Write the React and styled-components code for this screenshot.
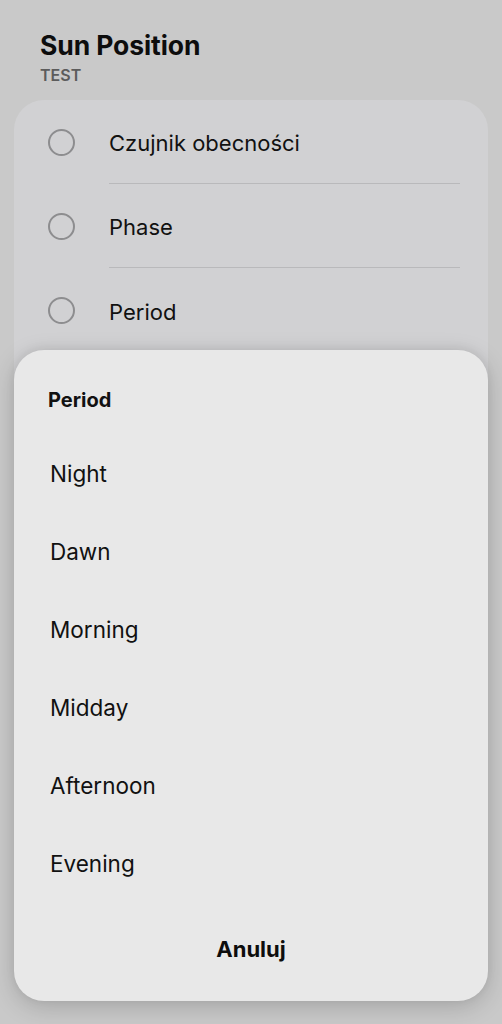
import React from "react";
import styled, { createGlobalStyle } from "styled-components";

const Global = createGlobalStyle`
  html, body { margin: 0; padding: 0; background: #c9c9c9; }
  body { font-family: Inter, "Noto Sans", Roboto, sans-serif; color: #111; -webkit-font-smoothing: antialiased; }
  * { box-sizing: border-box; }
`;

const Page = styled.div`
  width: 502px;
  height: 1024px;
  overflow: hidden;
  background: #c9c9c9;
  position: relative;
`;

const Header = styled.header`
  padding: 29px 40px 0 40px;
  display: flex;
  flex-direction: column;
`;

const Title = styled.h1`
  margin: 0;
  font-size: 26.5px;
  line-height: 32px;
  font-weight: 700;
  color: #0d0d0d;
  letter-spacing: -0.1px;
`;

const Subtitle = styled.div`
  margin-top: 4px;
  font-size: 16px;
  line-height: 20px;
  font-weight: 600;
  color: #5c5c5c;
`;

const Card = styled.section`
  margin: 15px 14px 0 14px;
  background: #d1d1d3;
  border-radius: 30px;
  padding: 0 28px 400px 0;
  display: flex;
  flex-direction: column;
`;

const Row = styled.div`
  display: flex;
  align-items: stretch;
  height: 84px;
`;

const RadioCell = styled.div`
  width: 95px;
  display: flex;
  align-items: center;
  justify-content: center;
`;

const Radio = styled.span`
  width: 27px;
  height: 27px;
  border-radius: 50%;
  border: 2px solid #8d8d8f;
  margin-left: -1px;
`;

const Label = styled.div`
  flex: 1;
  display: flex;
  align-items: center;
  font-size: 22px;
  color: #111;
  border-bottom: ${(p) => (p.$last ? "none" : "1.5px solid #b9b9bb")};
  padding-top: 3px;
`;

const Sheet = styled.div`
  position: absolute;
  left: 14px;
  right: 14px;
  bottom: 23px;
  background: #e8e8e8;
  border-radius: 30px;
  box-shadow: 0 6px 24px rgba(0, 0, 0, 0.18), 0 -2px 10px rgba(0, 0, 0, 0.06);
  padding: 38px 0 24px 0;
  display: flex;
  flex-direction: column;
`;

const SheetTitle = styled.div`
  padding-left: 34px;
  font-size: 20px;
  line-height: 24px;
  font-weight: 700;
  color: #111;
`;

const Options = styled.div`
  margin-top: 22px;
  display: flex;
  flex-direction: column;
`;

const Option = styled.div`
  height: 78px;
  display: flex;
  align-items: center;
  padding-left: 36px;
  font-size: 22.5px;
  color: #111;
`;

const Cancel = styled.button`
  margin-top: 19px;
  height: 56px;
  border: none;
  background: transparent;
  font-family: inherit;
  font-size: 22px;
  font-weight: 700;
  color: #0d0d0d;
  cursor: pointer;
`;

const rows = ["Czujnik obecności", "Phase", "Period"];
const options = ["Night", "Dawn", "Morning", "Midday", "Afternoon", "Evening"];

export default function App() {
  return (
    <Page>
      <Global />
      <Header>
        <Title>Sun Position</Title>
        <Subtitle>TEST</Subtitle>
      </Header>
      <Card>
        {rows.map((r, i) => (
          <Row key={r}>
            <RadioCell>
              <Radio />
            </RadioCell>
            <Label $last={i === rows.length - 1}>{r}</Label>
          </Row>
        ))}
      </Card>
      <Sheet>
        <SheetTitle>Period</SheetTitle>
        <Options>
          {options.map((o) => (
            <Option key={o}>{o}</Option>
          ))}
        </Options>
        <Cancel>Anuluj</Cancel>
      </Sheet>
    </Page>
  );
}
